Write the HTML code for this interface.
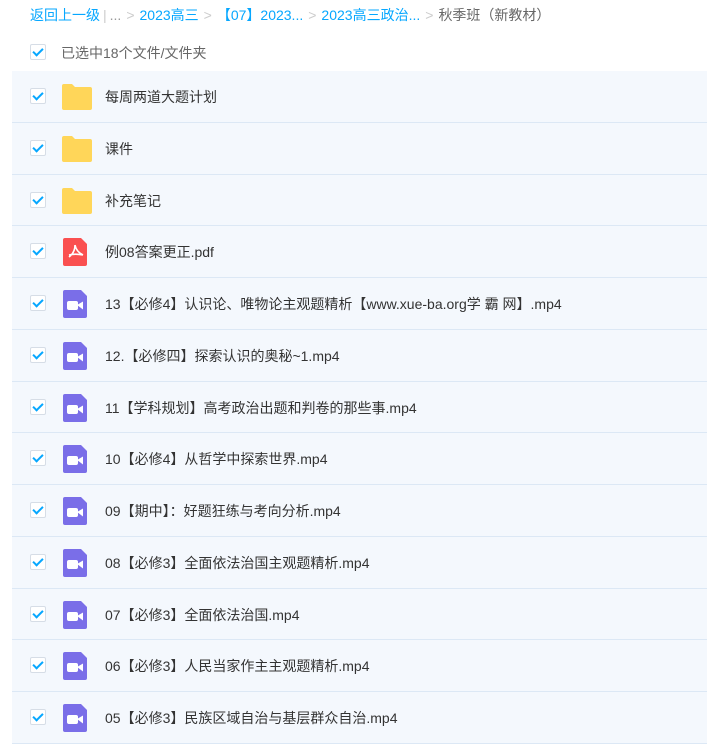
<!DOCTYPE html><html><head><meta charset="utf-8"><style>
body{margin:0;width:707px;height:740px;overflow:hidden;background:#fff;font-family:"Liberation Sans","Noto Sans CJK SC",sans-serif;}
.bc{position:absolute;top:5px;left:30px;font-size:14px;color:#999;white-space:nowrap}
.bc a{color:#06a7ff}
.bc .s{color:#ccc;margin:0 5px}
.sel{position:absolute;top:43px;left:30px;font-size:14px;color:#666}
.cb{position:absolute;width:14px;height:14px;border:1px solid #d6dde6;border-radius:2px;background:#fff}
.cb:after{content:"";position:absolute;left:4px;top:1px;width:4px;height:8px;border:solid #06a7ff;border-width:0 2.5px 2.5px 0;transform:rotate(45deg)}
.row{position:absolute;left:12px;width:695px;box-sizing:border-box;background:#f4f8fd;border-bottom:1px solid #dce8f5}
.row .cb{left:18px;top:17px}
.row .t{position:absolute;left:93px;top:16px;font-size:14px;color:#333;white-space:nowrap}
.ic{position:absolute;left:49px;top:11px}
</style></head><body>
<div class="bc"><a>返回上一级</a><span class="s" style="margin:0 3px">|</span>...<span class="s">&gt;</span><a>2023高三</a><span class="s">&gt;</span><a>【07】2023...</a><span class="s">&gt;</span><a>2023高三政治...</a><span class="s">&gt;</span><span style="color:#666">秋季班（新教材）</span></div>
<div class="cb" style="left:30px;top:44px"></div>
<div class="sel" style="left:61px">已选中18个文件/文件夹</div>
<div id="rows"></div>
<script>
var F='<svg class="ic" width="32" height="30" viewBox="0 0 32 30"><path d="M1 4a2 2 0 0 1 2-2h8l3 3h15a2 2 0 0 1 2 2v19a2 2 0 0 1-2 2H3a2 2 0 0 1-2-2z" fill="#ffd659"/></svg>';
var P='<svg class="ic" width="30" height="30" viewBox="0 0 30 30"><path d="M4 1h16l6 6v20a2 2 0 0 1-2 2H4a2 2 0 0 1-2-2V3a2 2 0 0 1 2-2z" fill="#fa5050"/><path d="M14 8c0 5-2 9-6 12M14 8c1 5 4 8 8 10M8 18c4-1 9-1 14 0" stroke="#fff" stroke-width="1.6" fill="none"/></svg>';
var V='<svg class="ic" width="30" height="30" viewBox="0 0 30 30"><path d="M4 1h16l6 6v20a2 2 0 0 1-2 2H4a2 2 0 0 1-2-2V3a2 2 0 0 1 2-2z" fill="#7a6ee8"/><rect x="6" y="12" width="11" height="9" rx="2" fill="#fff"/><path d="M16 16l6-3.5v8z" fill="#fff"/></svg>';
var d=[[F,"每周两道大题计划"],[F,"课件"],[F,"补充笔记"],[P,"例08答案更正.pdf"],[V,"13【必修4】认识论、唯物论主观题精析【www.xue-ba.org学 霸 网】.mp4"],[V,"12.【必修四】探索认识的奥秘~1.mp4"],[V,"11【学科规划】高考政治出题和判卷的那些事.mp4"],[V,"10【必修4】从哲学中探索世界.mp4"],[V,"09【期中】：好题狂练与考向分析.mp4"],[V,"08【必修3】全面依法治国主观题精析.mp4"],[V,"07【必修3】全面依法治国.mp4"],[V,"06【必修3】人民当家作主主观题精析.mp4"],[V,"05【必修3】民族区域自治与基层群众自治.mp4"]];
var h='';d.forEach(function(r,i){var t=Math.round(71+i*51.75),n=Math.round(71+(i+1)*51.75);h+='<div class="row" style="top:'+t+'px;height:'+(n-t)+'px"><div class="cb"></div>'+r[0]+'<div class="t">'+r[1]+'</div></div>';});
document.getElementById('rows').innerHTML=h;
</script>
</body></html>
